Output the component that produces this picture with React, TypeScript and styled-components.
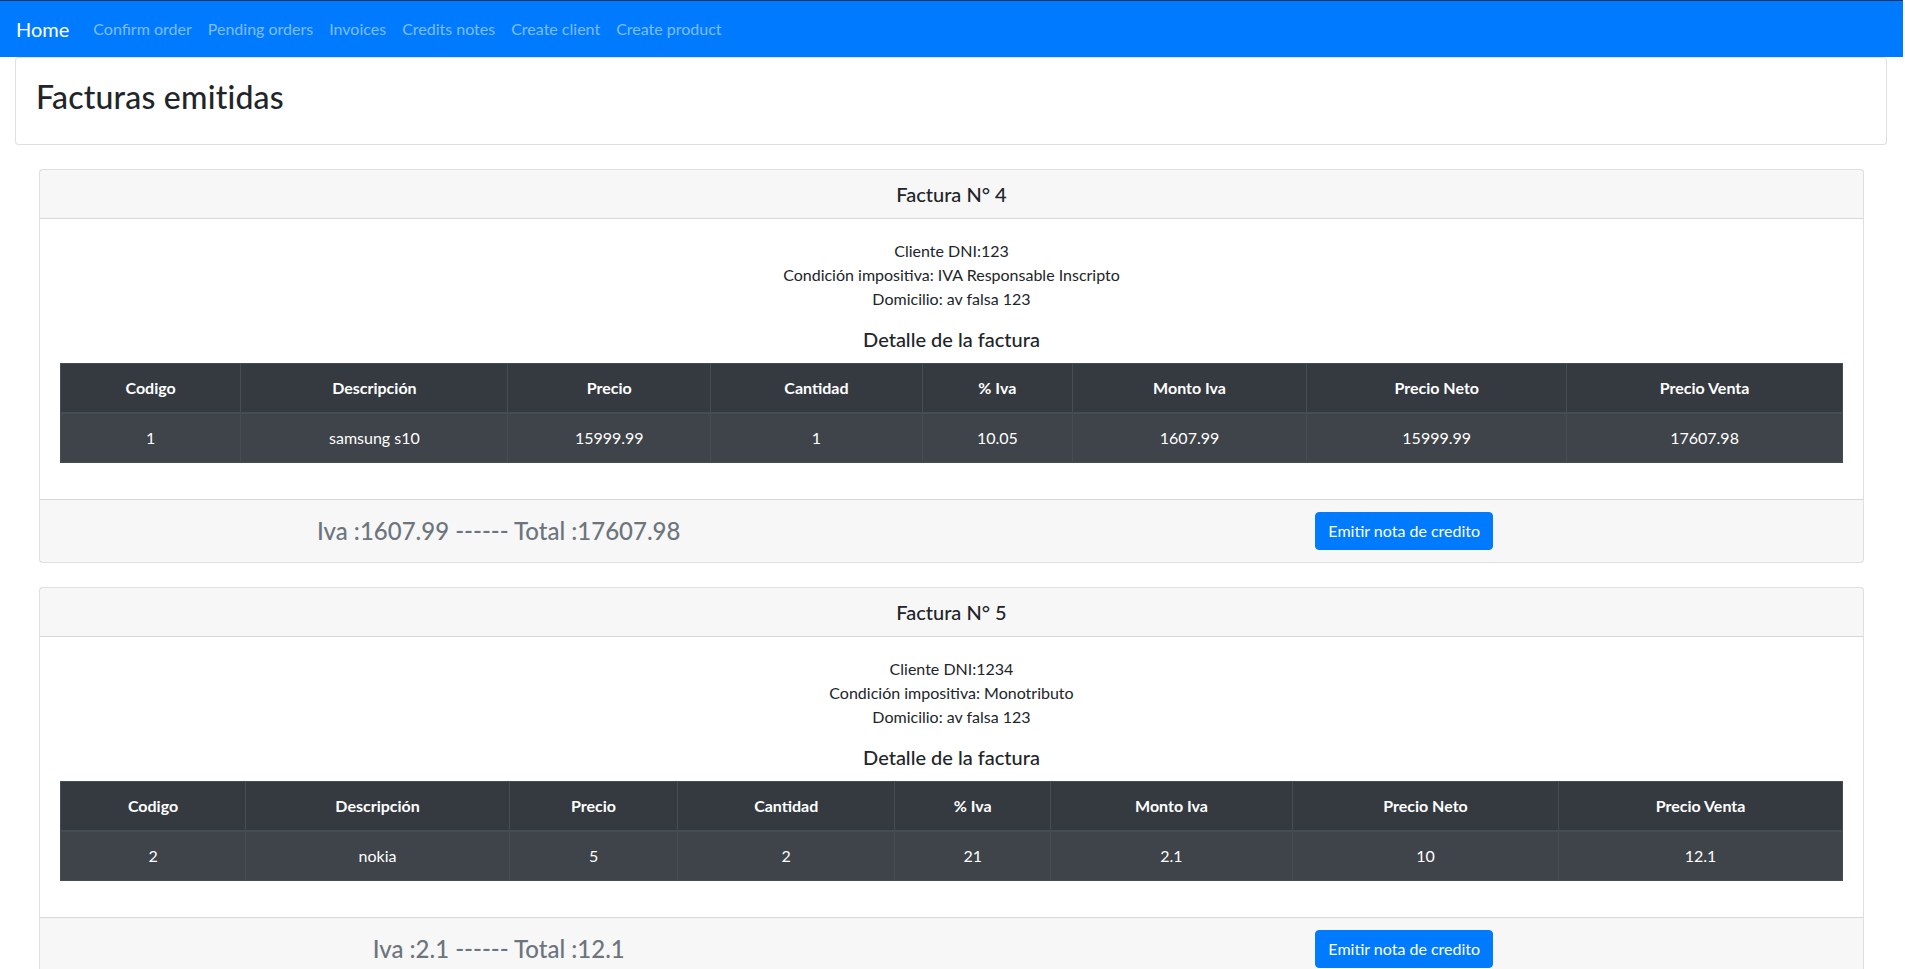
import React from "react";
import styled, { createGlobalStyle } from "styled-components";

const GlobalStyle = createGlobalStyle`
  html { scrollbar-width: none; }
  html::-webkit-scrollbar { display: none; }
  body {
    margin: 0;
    font-family: Lato, "Liberation Sans", sans-serif;
    font-size: 16px;
    line-height: 1.5;
    color: #212529;
    background: #fff;
  }
  * { box-sizing: border-box; }
`;

const Page = styled.div`
  display: flex;
  flex-direction: column;
  padding-right: 2px;
  padding-bottom: 24px;
`;

const Navbar = styled.nav`
  display: flex;
  align-items: center;
  height: 57px;
  padding: 0 16px;
  background: #007bff;
  border-top: 1px solid #1f3556;
`;

const Brand = styled.a`
  font-size: 20px;
  line-height: 30px;
  padding: 5px 0;
  margin-right: 16px;
  color: #fff;
  text-decoration: none;
`;

const NavList = styled.div`
  display: flex;
`;

const NavLink = styled.a`
  padding: 8px;
  font-size: 16px;
  line-height: 24px;
  color: rgba(255, 255, 255, 0.5);
  text-decoration: none;
`;

const Card = styled.section<{ $inset?: boolean }>`
  display: flex;
  flex-direction: column;
  background: #fff;
  border: 1px solid rgba(0, 0, 0, 0.125);
  border-radius: 4px;
  margin: ${(p) => (p.$inset ? "24px 39px 0 39px" : "0 16px 0 15px")};
`;

const CardBody = styled.div`
  padding: 20px;
`;

const PageTitle = styled.h2`
  margin: 0 0 8px;
  font-size: 32px;
  font-weight: 500;
  line-height: 1.2;
  letter-spacing: 0.2px;
`;

const CardHeader = styled.header`
  padding: 12px 20px;
  background: rgba(0, 0, 0, 0.03);
  border-bottom: 1px solid rgba(0, 0, 0, 0.125);
  text-align: center;
`;

const HeaderTitle = styled.h5`
  margin: 0;
  font-size: 20px;
  font-weight: 500;
  line-height: 24px;
`;

const ClientInfo = styled.div`
  margin-bottom: 16px;
  text-align: center;
`;

const InfoLine = styled.p`
  margin: 0;
  line-height: 24px;
`;

const SectionTitle = styled.h5`
  margin: 0 0 12px;
  font-size: 20px;
  font-weight: 500;
  line-height: 24px;
  text-align: center;
`;

const Table = styled.table`
  width: 100%;
  margin-bottom: 16px;
  table-layout: fixed;
  border-collapse: collapse;
  background: #343a40;
  color: #fff;
`;

const Col = styled.col<{ $w: number }>`
  width: ${(p) => p.$w}%;
`;

const Th = styled.th`
  padding: 12px;
  line-height: 24px;
  font-weight: 700;
  text-align: center;
  border: 1px solid #454d55;
  border-bottom-width: 2px;
`;

const Tr = styled.tr`
  background: rgba(255, 255, 255, 0.05);
`;

const Td = styled.td`
  padding: 12px;
  line-height: 24px;
  text-align: center;
  border: 1px solid #454d55;
`;

const CardFooter = styled.footer`
  display: grid;
  grid-template-columns: 1fr 1fr;
  column-gap: 28px;
  align-items: center;
  padding: 12px 20px;
  background: rgba(0, 0, 0, 0.03);
  border-top: 1px solid rgba(0, 0, 0, 0.125);
`;

const Totals = styled.h4`
  margin: 0;
  font-size: 24px;
  font-weight: 500;
  line-height: 1.2;
  color: #6c757d;
  text-align: center;
`;

const Button = styled.button`
  justify-self: center;
  padding: 6px 12px;
  font-family: inherit;
  font-size: 16px;
  line-height: 24px;
  color: #fff;
  background: #007bff;
  border: 1px solid #007bff;
  border-radius: 4px;
  cursor: pointer;
`;

type Item = {
  codigo: string;
  descripcion: string;
  precio: string;
  cantidad: string;
  iva: string;
  montoIva: string;
  neto: string;
  venta: string;
};

type Invoice = {
  numero: number;
  dni: string;
  condicion: string;
  domicilio: string;
  widths: number[];
  items: Item[];
  iva: string;
  total: string;
};

const columns = [
  "Codigo",
  "Descripción",
  "Precio",
  "Cantidad",
  "% Iva",
  "Monto Iva",
  "Precio Neto",
  "Precio Venta",
];

const invoices: Invoice[] = [
  {
    numero: 4,
    dni: "123",
    condicion: "IVA Responsable Inscripto",
    domicilio: "av falsa 123",
    widths: [180.4, 267.4, 202.7, 212, 150, 234.7, 260, 276],
    items: [
      {
        codigo: "1",
        descripcion: "samsung s10",
        precio: "15999.99",
        cantidad: "1",
        iva: "10.05",
        montoIva: "1607.99",
        neto: "15999.99",
        venta: "17607.98",
      },
    ],
    iva: "1607.99",
    total: "17607.98",
  },
  {
    numero: 5,
    dni: "1234",
    condicion: "Monotributo",
    domicilio: "av falsa 123",
    widths: [185.2, 264.1, 168.1, 217.5, 155.7, 242, 266.3, 284],
    items: [
      {
        codigo: "2",
        descripcion: "nokia",
        precio: "5",
        cantidad: "2",
        iva: "21",
        montoIva: "2.1",
        neto: "10",
        venta: "12.1",
      },
    ],
    iva: "2.1",
    total: "12.1",
  },
];

const navLinks = [
  "Confirm order",
  "Pending orders",
  "Invoices",
  "Credits notes",
  "Create client",
  "Create product",
];

function InvoiceCard({ inv }: { inv: Invoice }) {
  const sum = inv.widths.reduce((a, b) => a + b, 0);
  return (
    <Card $inset>
      <CardHeader>
        <HeaderTitle>Factura N° {inv.numero}</HeaderTitle>
      </CardHeader>
      <CardBody>
        <ClientInfo>
          <InfoLine>Cliente DNI:{inv.dni}</InfoLine>
          <InfoLine>Condición impositiva: {inv.condicion}</InfoLine>
          <InfoLine>Domicilio: {inv.domicilio}</InfoLine>
        </ClientInfo>
        <SectionTitle>Detalle de la factura</SectionTitle>
        <Table>
          <colgroup>
            {inv.widths.map((w, i) => (
              <Col key={i} $w={(w / sum) * 100} />
            ))}
          </colgroup>
          <thead>
            <tr>
              {columns.map((c) => (
                <Th key={c}>{c}</Th>
              ))}
            </tr>
          </thead>
          <tbody>
            {inv.items.map((it) => (
              <Tr key={it.codigo}>
                <Td>{it.codigo}</Td>
                <Td>{it.descripcion}</Td>
                <Td>{it.precio}</Td>
                <Td>{it.cantidad}</Td>
                <Td>{it.iva}</Td>
                <Td>{it.montoIva}</Td>
                <Td>{it.neto}</Td>
                <Td>{it.venta}</Td>
              </Tr>
            ))}
          </tbody>
        </Table>
      </CardBody>
      <CardFooter>
        <Totals>
          Iva :{inv.iva} ------ Total :{inv.total}
        </Totals>
        <Button type="button">Emitir nota de credito</Button>
      </CardFooter>
    </Card>
  );
}

export default function App() {
  return (
    <Page>
      <GlobalStyle />
      <Navbar>
        <Brand href="#">Home</Brand>
        <NavList>
          {navLinks.map((l) => (
            <NavLink key={l} href="#">
              {l}
            </NavLink>
          ))}
        </NavList>
      </Navbar>
      <Card>
        <CardBody>
          <PageTitle>Facturas emitidas</PageTitle>
        </CardBody>
      </Card>
      {invoices.map((inv) => (
        <InvoiceCard key={inv.numero} inv={inv} />
      ))}
    </Page>
  );
}
